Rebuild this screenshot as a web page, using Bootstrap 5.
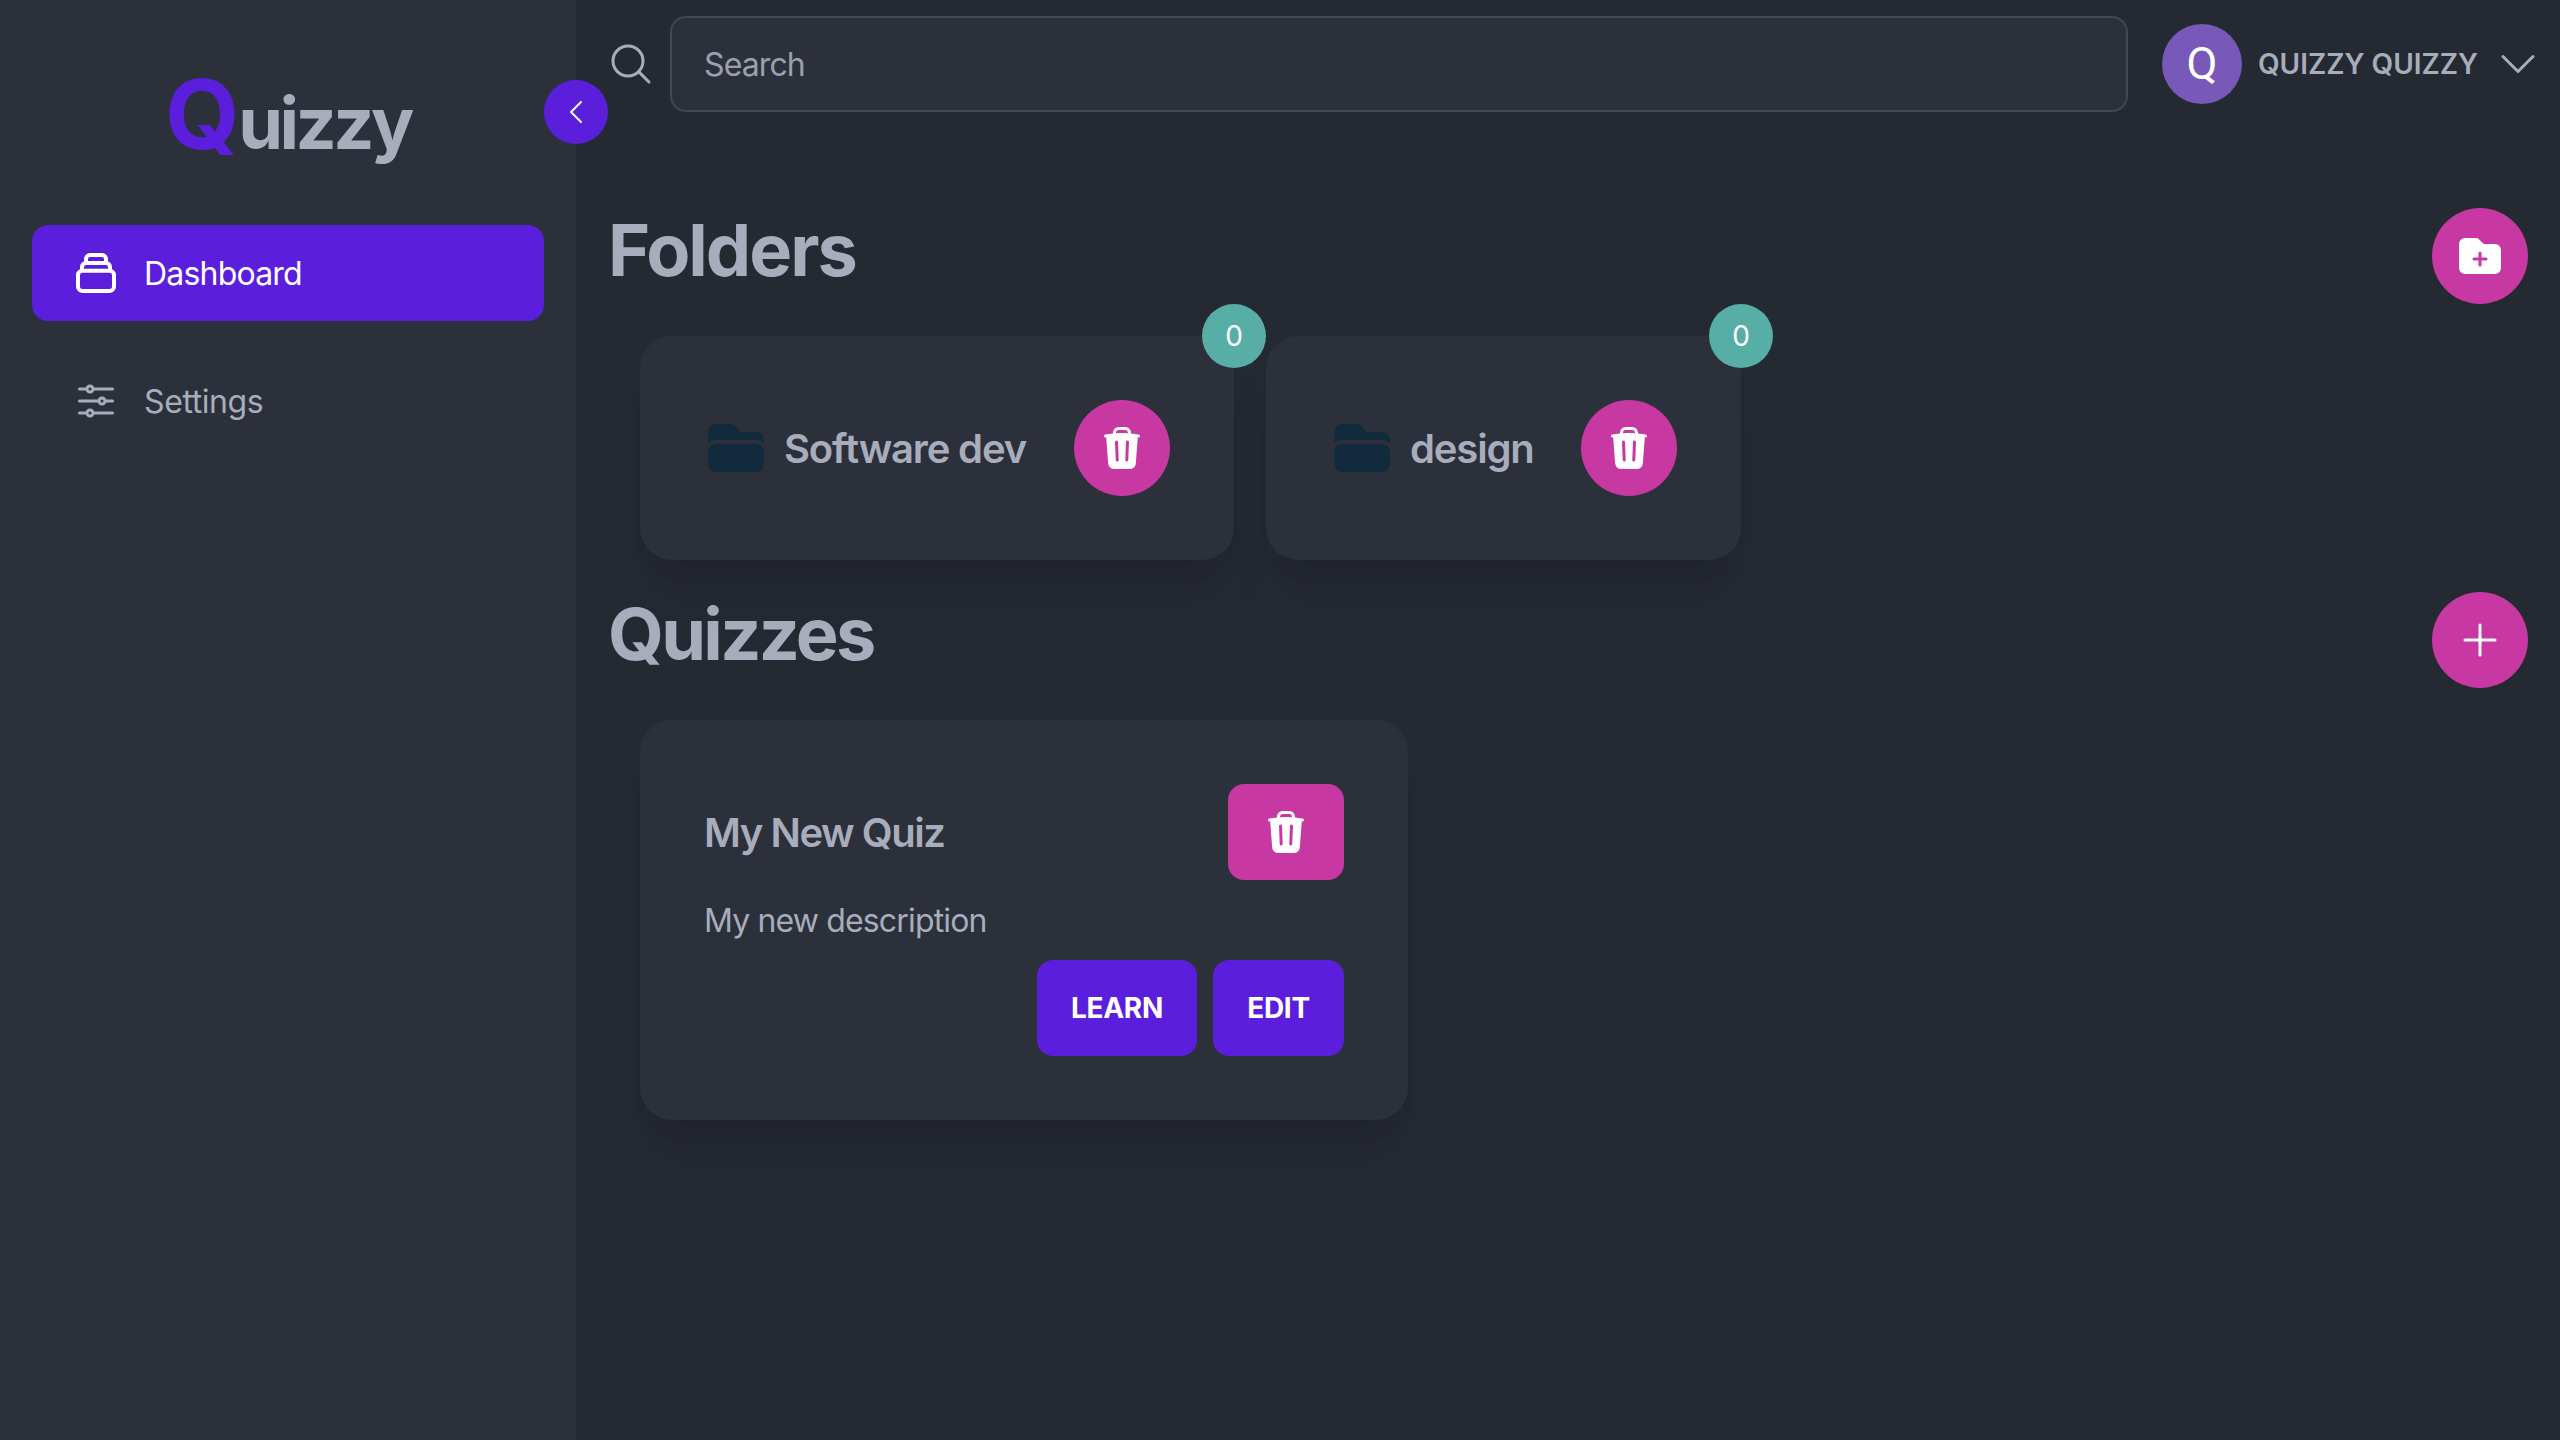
<!DOCTYPE html>
<html lang="en">
<head>
<meta charset="utf-8">
<meta name="viewport" content="width=device-width, initial-scale=1">
<title>Quizzy</title>
<link href="https://cdn.jsdelivr.net/npm/bootstrap@5.3.0/dist/css/bootstrap.min.css" rel="stylesheet">
<style>
  :root { --ink:#a7adba; --panel:#2c303b; --ground:#252932; --violet:#5b1edc; --pink:#c738a3; --teal:#57aea7; }
  body { font-family: Inter, "Liberation Sans", sans-serif; font-size:32px; line-height:48px; color:var(--ink); background:var(--ground); }
  svg { display:block; flex:none; width:48px; height:48px; }
  .line-icon { fill:none; stroke:currentColor; stroke-width:1.5; stroke-linecap:round; stroke-linejoin:round; }
  .stack-icon { stroke-width:4; }
  .side { width:576px; background:var(--panel); padding:0 32px; }
  .brand { height:225px; padding-top:66px; font-size:72px; line-height:96px; font-weight:700; }
  .brand-q { font-size:96px; color:var(--violet); letter-spacing:-1.4px; }
  .brand-rest { letter-spacing:-3.5px; }
  .side .nav { gap:32px; }
  .side .nav-link { height:96px; padding:0 40px; gap:24px; border-radius:16px; color:var(--ink); }
  .side .nav-link.active { background:var(--violet); color:#fff; }
  .side .nav-link span { letter-spacing:-.4px; padding-top:2px; }
  .side .nav-link.active span { letter-spacing:-.8px; }
  .collapse-btn { top:80px; right:-32px; width:64px; height:64px; background:var(--violet); color:#fff; z-index:2; }
  .collapse-btn svg { width:32px; height:32px; }
  .topbar { height:128px; padding:0 18px 0 31px; }
  .search-input, .search-input:focus { height:96px; margin-left:15px; padding:0 32px; font-size:32px; letter-spacing:-.9px; color:var(--ink); background:var(--panel); border:2px solid #434753; border-radius:16px; }
  .search-input::placeholder { color:#9ba0ac; opacity:1; }
  .avatar { width:80px; height:80px; margin-left:34px; background:#7858b9; color:#fff; font:400 45px/79px Roboto, sans-serif; }
  .user-name { margin:0 16px; font-size:28px; font-weight:600; white-space:nowrap; }
  .folder-section { margin-top:80px; }
  .quiz-section { margin-top:32px; }
  .section-head { padding:0 32px; height:96px; }
  .section-head h1 { margin:0; padding-top:2px; font-size:72px; line-height:80px; font-weight:700; letter-spacing:-2px; }
  .quiz-section .section-head h1 { letter-spacing:-2.7px; }
  .round-btn, .pill-btn { height:96px; border:0; color:#fff; background:var(--pink); }
  .round-btn { width:96px; border-radius:50%; }
  .pill-btn { border-radius:16px; padding:0 34px; font-size:28px; font-weight:700; letter-spacing:-.3px; }
  .pill-btn.go { background:var(--violet); padding:0; width:131px; }
  .pill-btn.learn { width:160px; }
  .tile { background:var(--panel); border-radius:32px; padding:64px; box-shadow:0 40px 50px -10px rgba(0,0,0,.1), 0 20px 20px -10px rgba(0,0,0,.04); }
  .tile h2 { margin:0; padding-top:2px; font-size:40px; line-height:56px; font-weight:600; letter-spacing:-1.15px; white-space:nowrap; }
  .tile .name-dev { width:242px; }
  .tile .name-design { width:123px; }
  .tile .name-quiz { letter-spacing:-1.45px; }
  .folders { padding:32px 64px 0; gap:32px; }
  .folder-icon { width:64px; height:64px; color:#112b3c; margin-right:16px; }
  .count { top:-32px; right:-32px; width:64px; height:64px; background:var(--teal); color:#fff; font-size:28px; z-index:1; }
  .quiz { width:768px; height:400px; margin:32px 64px 0; }
  .quiz p { margin:17px 0 15px; letter-spacing:-.85px; }
</style>
</head>
<body class="overflow-hidden">
<svg class="d-none">
  <symbol id="trash" viewBox="0 0 24 24"><path fill="currentColor" fill-rule="evenodd" clip-rule="evenodd" d="M16.5 4.478v.227a48.816 48.816 0 013.878.512.75.75 0 11-.256 1.478l-.209-.035-1.005 13.07a3 3 0 01-2.991 2.77H8.084a3 3 0 01-2.991-2.77L4.087 6.66l-.209.035a.75.75 0 01-.256-1.478A48.567 48.567 0 017.5 4.705v-.227c0-1.564 1.213-2.9 2.816-2.951a52.662 52.662 0 013.369 0c1.603.051 2.815 1.387 2.815 2.951zm-6.136-1.452a51.196 51.196 0 013.273 0C14.39 3.05 15 3.684 15 4.478v.113a49.488 49.488 0 00-6 0v-.113c0-.794.609-1.428 1.364-1.452zm-.355 5.945a.75.75 0 10-1.5.058l.347 9a.75.75 0 101.499-.058l-.346-9zm5.48.058a.75.75 0 10-1.498-.058l-.347 9a.75.75 0 001.5.058l.345-9z"/></symbol>
  <symbol id="folder" viewBox="0 0 24 24"><path fill="currentColor" d="M19.5 21a3 3 0 003-3v-4.5a3 3 0 00-3-3h-15a3 3 0 00-3 3V18a3 3 0 003 3h15zM1.5 10.146V6a3 3 0 013-3h5.379a2.25 2.25 0 011.59.659l2.122 2.121c.14.141.331.22.53.22H19.5a3 3 0 013 3v1.146A4.483 4.483 0 0019.5 9h-15a4.483 4.483 0 00-3 1.146z"/></symbol>
</svg>
<div class="d-flex vh-100">
  <aside class="side position-relative flex-shrink-0">
    <div class="brand text-center"><span class="brand-q">Q</span><span class="brand-rest">uizzy</span></div>
    <nav class="nav flex-column">
      <a class="nav-link active d-flex align-items-center" href="#">
        <svg class="line-icon stack-icon" viewBox="0 0 48 48"><rect x="6" y="21.7" width="36" height="20.3" rx="4.5"/><path d="M10 21.5V18a4 4 0 014-4h20a4 4 0 014 4v3.5M14 14v-4a4 4 0 014-4h12a4 4 0 014 4v4"/></svg>
        <span>Dashboard</span>
      </a>
      <a class="nav-link d-flex align-items-center" href="#">
        <svg class="line-icon" viewBox="0 0 24 24"><path d="M10.5 6h9.75M10.5 6a1.5 1.5 0 11-3 0m3 0a1.5 1.5 0 10-3 0M3.75 6H7.5m3 12h9.75m-9.75 0a1.5 1.5 0 01-3 0m3 0a1.5 1.5 0 00-3 0m-3.75 0H7.5m9-6h3.75m-3.75 0a1.5 1.5 0 01-3 0m3 0a1.5 1.5 0 00-3 0m-9.75 0h9.75"/></svg>
        <span>Settings</span>
      </a>
    </nav>
    <button class="collapse-btn btn border-0 rounded-circle p-0 position-absolute d-flex align-items-center justify-content-center" aria-label="Collapse">
      <svg class="line-icon" viewBox="0 0 24 24"><path d="M15.75 19.5L8.25 12l7.5-7.5"/></svg>
    </button>
  </aside>
  <main class="flex-grow-1">
    <header class="topbar d-flex align-items-center">
      <svg class="line-icon" viewBox="0 0 24 24"><path d="M21 21l-5.197-5.197m0 0A7.5 7.5 0 105.196 5.196a7.5 7.5 0 0010.607 10.607z"/></svg>
      <input class="search-input form-control flex-grow-1 shadow-none" type="text" placeholder="Search">
      <div class="avatar rounded-circle text-center flex-shrink-0">Q</div>
      <span class="user-name">QUIZZY QUIZZY</span>
      <svg class="line-icon" viewBox="0 0 24 24"><path d="M19.5 8.25l-7.5 7.5-7.5-7.5"/></svg>
    </header>
    <section class="folder-section">
      <div class="section-head d-flex justify-content-between">
        <h1>Folders</h1>
        <button class="round-btn d-flex align-items-center justify-content-center" aria-label="Add folder">
          <svg viewBox="0 0 24 24"><path fill="currentColor" fill-rule="evenodd" d="M19.5 21a3 3 0 003-3V9a3 3 0 00-3-3h-5.379a.75.75 0 01-.53-.22L11.47 3.66A2.25 2.25 0 009.879 3H4.5a3 3 0 00-3 3v12a3 3 0 003 3h15zm-6.75-10.5a.75.75 0 00-1.5 0v2.25H9a.75.75 0 000 1.5h2.25v2.25a.75.75 0 001.5 0v-2.25H15a.75.75 0 000-1.5h-2.25V10.5z"/></svg>
        </button>
      </div>
      <div class="folders d-flex">
        <article class="tile position-relative d-flex align-items-center">
          <svg class="folder-icon"><use href="#folder"/></svg>
          <h2 class="name-dev">Software dev</h2>
          <button class="round-btn ms-5 d-flex align-items-center justify-content-center" aria-label="Delete"><svg><use href="#trash"/></svg></button>
          <span class="count rounded-circle position-absolute d-flex align-items-center justify-content-center">0</span>
        </article>
        <article class="tile position-relative d-flex align-items-center">
          <svg class="folder-icon"><use href="#folder"/></svg>
          <h2 class="name-design">design</h2>
          <button class="round-btn ms-5 d-flex align-items-center justify-content-center" aria-label="Delete"><svg><use href="#trash"/></svg></button>
          <span class="count rounded-circle position-absolute d-flex align-items-center justify-content-center">0</span>
        </article>
      </div>
    </section>
    <section class="quiz-section">
      <div class="section-head d-flex justify-content-between">
        <h1>Quizzes</h1>
        <button class="round-btn d-flex align-items-center justify-content-center" aria-label="Add quiz">
          <svg class="line-icon" viewBox="0 0 24 24"><path d="M12 4.5v15m7.5-7.5h-15"/></svg>
        </button>
      </div>
      <article class="tile quiz">
        <div class="d-flex align-items-center justify-content-between">
          <h2 class="name-quiz">My New Quiz</h2>
          <button class="pill-btn" aria-label="Delete"><svg><use href="#trash"/></svg></button>
        </div>
        <p>My new description</p>
        <div class="d-flex justify-content-end gap-3">
          <button class="pill-btn go learn">LEARN</button>
          <button class="pill-btn go">EDIT</button>
        </div>
      </article>
    </section>
  </main>
</div>
<script src="https://cdn.jsdelivr.net/npm/bootstrap@5.3.0/dist/js/bootstrap.bundle.min.js"></script>
</body>
</html>
